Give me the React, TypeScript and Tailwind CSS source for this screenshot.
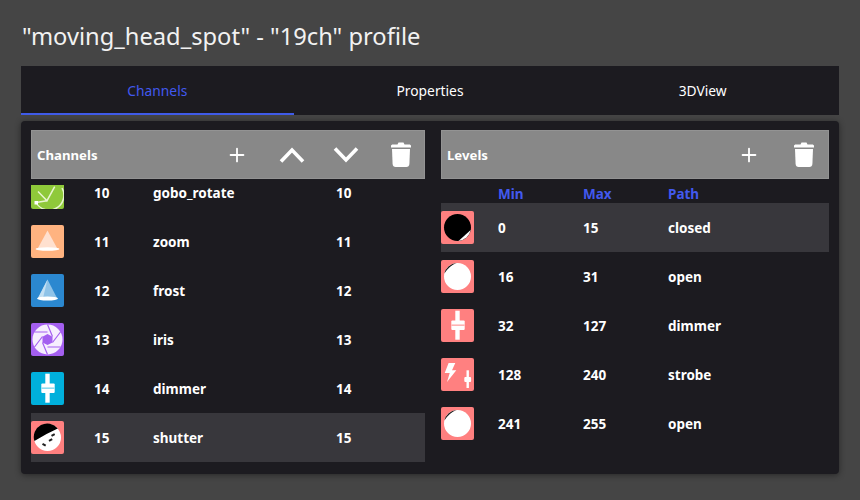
import { ReactNode } from 'react';
import { Plus } from 'lucide-react';

function Trash() {
  return (
    <svg width="20" height="25" viewBox="0 0 20 25" fill="#fff" className="block">
      <path d="M0 4C0 3 .8 2.500 2 2.500h4.500L7.500 .5h5l1 2H18c1.200 0 2 .5 2 1.500v1.500H0z" />
      <path d="M1 7h18l-.6 15c-.1 1.700-1.300 3-3 3H4.600c-1.700 0-2.900-1.300-3-3z" />
    </svg>
  );
}

function Chevron({ up }: { up?: boolean }) {
  return (
    <svg width="26" height="16" viewBox="0 0 26 16" fill="none" stroke="#fff" strokeWidth="3.600" className="block">
      <path d={up ? 'M2 14.500L13 3l11 11.500' : 'M2 1.500L13 13 24 1.500'} />
    </svg>
  );
}

function Tile({ bg, children }: { bg: string; children: ReactNode }) {
  return (
    <svg width="33" height="33" viewBox="0 0 33 33" className="shrink-0 rounded-[2px]">
      <rect width="33" height="33" fill={bg} />
      {children}
    </svg>
  );
}

const Gobo = () => (
  <Tile bg="#8fc93a">
    <g fill="none" stroke="#e8f5d0" strokeWidth="1.500">
      <path d="M31 12A14.800 14.800 0 0 1 5 26.500" />
      <path d="M7 15.500L16 24.700L23.700 10.700M5 26.500L16 24.700" />
    </g>
    <rect x="3.500" y="25" width="3.500" height="3.500" fill="#fff" />
  </Tile>
);
const Zoom = () => (
  <Tile bg="#ffb380">
    <path d="M16.500 5.500L26 23H7z" fill="#ffe0cf" />
    <ellipse cx="16.500" cy="24" rx="12" ry="1.800" fill="#fff" />
  </Tile>
);
const Frost = () => (
  <Tile bg="#2b88d0">
    <path d="M16.500 5.500L26 24H7z" fill="#8fc3e8" />
    <path d="M16.500 5.500L12 24H7z" fill="#c4e0f3" />
    <ellipse cx="16.500" cy="24.500" rx="10.500" ry="2" fill="#fff" />
  </Tile>
);
const Iris = () => (
  <Tile bg="#a45ff0">
    <circle cx="16.500" cy="16.500" r="15" fill="#f6eefe" />
    <g stroke="#a45ff0" strokeWidth="1.200" fill="none">
      <path d="M16.500 1.500L21.500 13.500M29.500 9L21.500 19.500M29.500 24H16.500M16.500 31.500L11.500 19.500M3.500 24L11.500 13.500M3.500 9H16.500" />
    </g>
    <path d="M16.500 11L21.500 13.800V19.500L16.500 22L11.500 19.500V13.800z" fill="#a45ff0" />
  </Tile>
);
const Fader = ({ bg, line }: { bg: string; line: string }) => (
  <Tile bg={bg}>
    <rect x="14.300" y="1.700" width="4.400" height="29" fill="#fff" />
    <rect x="10.300" y="11.500" width="13.400" height="9.500" rx="1" fill="#fff" />
    <rect x="10.300" y="15.400" width="13.400" height="1.600" fill={line} />
  </Tile>
);
const Shutter = () => (
  <Tile bg="#ff8080">
    <circle cx="16.500" cy="16.500" r="13.500" fill="#fff" />
    <path d="M3.400 20A13.500 13.500 0 0 1 26.800 7.500Q15.500 12.500 3.400 20z" fill="#000" />
    <path d="M20 14l3.200-1.700 1 1.800-3.200 1.700zM17.500 19l3.200-1.700 1 1.800-3.200 1.700zM12 22l3.200 1.700-1 1.800-3.200-1.700z" fill="#222" />
  </Tile>
);
const Closed = () => (
  <Tile bg="#ff8080">
    <circle cx="16.500" cy="16.500" r="13.500" fill="#000" />
    <path d="M29.700 19A13.500 13.500 0 0 1 17.500 30z" fill="#fff" />
  </Tile>
);
const Open = () => (
  <Tile bg="#ff8080">
    <circle cx="16.500" cy="16.500" r="13.500" fill="#fff" />
    <path d="M3.400 13.500A13.500 13.500 0 0 1 15.500 3Q8 6 3.400 13.500z" fill="#1a1a1a" />
  </Tile>
);
const Strobe = () => (
  <Tile bg="#ff8080">
    <path d="M7.600 5h6.700L11 12.300h4.300L6 24l2.700-9H3.700z" fill="#fff" />
    <rect x="25.500" y="12.300" width="2.400" height="17.700" fill="#fff" />
    <rect x="23.300" y="19" width="6.800" height="5" rx="1" fill="#fff" />
  </Tile>
);

const channels = [
  { icon: <Gobo />, ch: '10', name: 'gobo_rotate', dmx: '10' },
  { icon: <Zoom />, ch: '11', name: 'zoom', dmx: '11' },
  { icon: <Frost />, ch: '12', name: 'frost', dmx: '12' },
  { icon: <Iris />, ch: '13', name: 'iris', dmx: '13' },
  { icon: <Fader bg="#00b0dc" line="#8fdcf0" />, ch: '14', name: 'dimmer', dmx: '14' },
  { icon: <Shutter />, ch: '15', name: 'shutter', dmx: '15', selected: true },
];

const levels = [
  { icon: <Closed />, min: '0', max: '15', path: 'closed', selected: true },
  { icon: <Open />, min: '16', max: '31', path: 'open' },
  { icon: <Fader bg="#ff8080" line="#ffb3b3" />, min: '32', max: '127', path: 'dimmer' },
  { icon: <Strobe />, min: '128', max: '240', path: 'strobe' },
  { icon: <Open />, min: '241', max: '255', path: 'open' },
];

export default function App() {
  return (
    <div
      className="w-[860px] h-[500px] overflow-hidden bg-[#454545] px-[21px] text-white"
      style={{ fontFamily: '"Noto Sans", "Open Sans", sans-serif' }}
    >
      <h1 className="h-[66px] pt-[18px] pl-px text-[23.700px] leading-[36px] font-normal text-[#f2f2f2]">
        "moving_head_spot" - "19ch" profile
      </h1>

      <div className="flex h-[49px] bg-[#1c1b20] text-[13.800px]">
        <div className="flex-1 flex items-center justify-center pt-[3px] border-b-2 border-[#3f5be8] text-[#4259ee]">Channels</div>
        <div className="flex-1 flex items-center justify-center pt-[3px] border-b-2 border-transparent">Properties</div>
        <div className="flex-1 flex items-center justify-center pt-[3px] border-b-2 border-transparent">3DView</div>
      </div>

      <div className="mt-[6px] h-[353px] rounded-[4px] bg-[#1c1b20] pt-[9px] px-[10px] flex gap-4 text-[13.500px] font-bold shadow-[0_1px_6px_rgba(0,0,0,0.45)]">
        <div className="w-[394px]">
          <div className="h-[49px] bg-[#888888] border border-[#939393] flex items-center pl-[5px]">
            <span className="flex-1 pt-[3px] text-[13.200px]">Channels</span>
            <Plus size={22} strokeWidth={2} className="mr-[31px]" />
            <span className="mr-[28px]"><Chevron up /></span>
            <span className="mr-[32px]"><Chevron /></span>
            <span className="mr-[13px]"><Trash /></span>
          </div>
          <div className="mt-[6px] h-[277px] overflow-hidden">
            <div className="-mt-[17px]">
              {channels.map(c => (
                <div key={c.ch} className={`h-[49px] flex items-center ${c.selected ? 'bg-[#38373c]' : ''}`}>
                  {c.icon}
                  <span className="ml-[30px] w-[59px] pt-px">{c.ch}</span>
                  <span className="w-[183px] pt-px">{c.name}</span>
                  <span className="pt-px">{c.dmx}</span>
                </div>
              ))}
            </div>
          </div>
        </div>

        <div className="w-[388px]">
          <div className="h-[49px] bg-[#888888] border border-[#939393] flex items-center pl-[5px]">
            <span className="flex-1 pt-[3px] text-[13.200px]">Levels</span>
            <Plus size={22} strokeWidth={2} className="mr-[34px]" />
            <span className="mr-[14px]"><Trash /></span>
          </div>
          <div className="h-[24px] flex items-center pt-[7px] text-[#4259ee]">
            <span className="ml-[57px] w-[85px]">Min</span>
            <span className="w-[85px]">Max</span>
            <span>Path</span>
          </div>
          {levels.map(l => (
            <div key={l.min} className={`h-[49px] flex items-center ${l.selected ? 'bg-[#38373c]' : ''}`}>
              {l.icon}
              <span className="ml-[24px] w-[85px] pt-[2px]">{l.min}</span>
              <span className="w-[85px] pt-[2px]">{l.max}</span>
              <span className="pt-[2px]">{l.path}</span>
            </div>
          ))}
        </div>
      </div>
    </div>
  );
}
